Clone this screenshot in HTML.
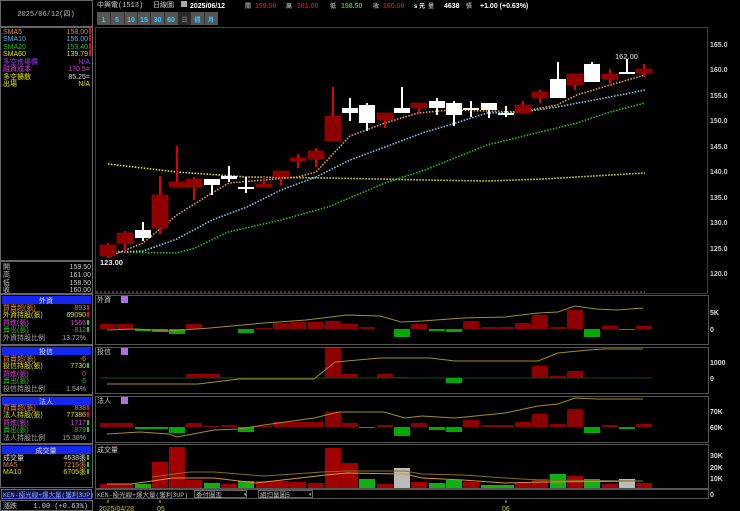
<!DOCTYPE html>
<html><head><meta charset="utf-8"><style>
html,body{margin:0;padding:0;background:#000;width:740px;height:511px;overflow:hidden}
svg{display:block}
text{font-family:"Liberation Sans","Noto Sans CJK TC",sans-serif;font-size:7px}
.m{font-family:"Liberation Mono","Noto Sans CJK TC",monospace}
</style></head><body>
<svg width="740" height="511" viewBox="0 0 740 511" xmlns="http://www.w3.org/2000/svg">
<rect width="740" height="511" fill="#000"/>
<!-- left panel -->
<g fill="none" stroke="#666" stroke-width="1">
<rect x="0.5" y="0.5" width="92" height="26"/>
<rect x="0.5" y="27.5" width="92" height="233"/>
<rect x="0.5" y="261.5" width="92" height="32"/>
<rect x="0.5" y="294.5" width="92" height="50"/>
<rect x="0.5" y="345.5" width="92" height="49"/>
<rect x="0.5" y="395.5" width="92" height="48"/>
<rect x="0.5" y="444.5" width="92" height="43"/>
</g>
<text x="46" y="16" fill="#bbb" text-anchor="middle" class="m">2025/06/12(四)</text>
<g class="m">
<text x="3" y="34" fill="#e08a40">SMA5</text><text x="88" y="34" fill="#e08a40" text-anchor="end">158.00</text>
<text x="3" y="41" fill="#5ab4e6">SMA10</text><text x="88" y="41" fill="#5ab4e6" text-anchor="end">156.00</text>
<text x="3" y="49" fill="#22c022">SMA20</text><text x="88" y="49" fill="#22c022" text-anchor="end">153.40</text>
<text x="3" y="56" fill="#e0e000">SMA60</text><text x="88" y="56" fill="#e0e000" text-anchor="end">139.79</text>
<text x="3" y="64" fill="#9040e0">多空進場價</text><text x="90" y="64" fill="#9040e0" text-anchor="end">N/A</text>
<text x="3" y="71" fill="#e040e0">融資成本</text><text x="90" y="71" fill="#e040e0" text-anchor="end">170.5=</text>
<text x="3" y="79" fill="#e0e000">多空擴散</text><text x="90" y="79" fill="#ddd" text-anchor="end">85.25=</text>
<text x="3" y="86" fill="#e0e000">出場</text><text x="90" y="86" fill="#e0e000" text-anchor="end">N/A</text>
</g>
<g fill="#f00"><rect x="89" y="28" width="2" height="6"/><rect x="89" y="35" width="2" height="6"/><rect x="89" y="43" width="2" height="6"/><rect x="89" y="50" width="2" height="6"/></g>
<g class="m" fill="#ccc">
<text x="3" y="269">開</text><text x="91" y="269" text-anchor="end">159.50</text>
<text x="3" y="277">高</text><text x="91" y="277" text-anchor="end">161.00</text>
<text x="3" y="285">低</text><text x="91" y="285" text-anchor="end">158.50</text>
<text x="3" y="292">收</text><text x="91" y="292" text-anchor="end">160.00</text>
</g>
<!-- section headers -->
<g fill="#1428f0"><rect x="2" y="296" width="89" height="8"/><rect x="2" y="347" width="89" height="8"/><rect x="2" y="397" width="89" height="8"/><rect x="2" y="446" width="89" height="8"/></g>
<g fill="#ddd" text-anchor="middle"><text x="46" y="303">外資</text><text x="46" y="354">投信</text><text x="46" y="404">法人</text><text x="46" y="453">成交量</text></g>
<g class="m">
<text x="3" y="310" fill="#e08a40">買賣超(張)</text><text x="86" y="310" fill="#e08a40" text-anchor="end">893</text>
<text x="3" y="317" fill="#e0e000">外資持股(張)</text><text x="86" y="317" fill="#e0e000" text-anchor="end">69090</text>
<text x="3" y="325" fill="#e040e0">買進(張)</text><text x="86" y="325" fill="#e040e0" text-anchor="end">1566</text>
<text x="3" y="332" fill="#22c022">賣出(張)</text><text x="86" y="332" fill="#22c022" text-anchor="end">812</text>
<text x="3" y="340" fill="#aaa">外資持股比例</text><text x="86" y="340" fill="#aaa" text-anchor="end">13.72%</text>
<text x="3" y="361" fill="#e08a40">買賣超(張)</text><text x="86" y="361" fill="#e08a40" text-anchor="end">-6</text>
<text x="3" y="368" fill="#e0e000">投信持股(張)</text><text x="86" y="368" fill="#e0e000" text-anchor="end">7730</text>
<text x="3" y="376" fill="#e040e0">買進(張)</text><text x="86" y="376" fill="#e040e0" text-anchor="end">0</text>
<text x="3" y="383" fill="#22c022">賣出(張)</text><text x="86" y="383" fill="#22c022" text-anchor="end">6</text>
<text x="3" y="391" fill="#aaa">投信持股比例</text><text x="86" y="391" fill="#aaa" text-anchor="end">1.54%</text>
<text x="3" y="410" fill="#e08a40">買賣超(張)</text><text x="86" y="410" fill="#e08a40" text-anchor="end">838</text>
<text x="3" y="417" fill="#e0e000">法人持股(張)</text><text x="86" y="417" fill="#e0e000" text-anchor="end">77386</text>
<text x="3" y="425" fill="#e040e0">買進(張)</text><text x="86" y="425" fill="#e040e0" text-anchor="end">1717</text>
<text x="3" y="432" fill="#22c022">賣出(張)</text><text x="86" y="432" fill="#22c022" text-anchor="end">879</text>
<text x="3" y="440" fill="#aaa">法人持股比例</text><text x="86" y="440" fill="#aaa" text-anchor="end">15.38%</text>
<text x="3" y="460" fill="#ddd">成交量</text><text x="86" y="460" fill="#ddd" text-anchor="end">4638張</text>
<text x="3" y="467" fill="#e08a40">MA5</text><text x="86" y="467" fill="#e08a40" text-anchor="end">7216張</text>
<text x="3" y="474" fill="#e0e000">MA10</text><text x="86" y="474" fill="#e0e000" text-anchor="end">6705張</text>
</g>
<g fill="#f00"><rect x="87" y="305" width="2" height="5"/><rect x="87" y="312" width="2" height="5"/><rect x="87" y="405" width="2" height="5"/><rect x="87" y="412" width="2" height="5"/></g>
<g fill="#2c2"><rect x="87" y="320" width="2" height="5"/><rect x="87" y="327" width="2" height="5"/><rect x="87" y="363" width="2" height="5"/><rect x="87" y="420" width="2" height="5"/><rect x="87" y="427" width="2" height="5"/><rect x="87" y="455" width="2" height="5"/><rect x="87" y="462" width="2" height="5"/><rect x="87" y="469" width="2" height="5"/></g>
<rect x="1.5" y="489.5" width="90" height="9" fill="#101040" stroke="#55f"/>
<text x="3" y="497" fill="#8af" class="m" style="font-size:6.5px">KEN-極光線+爆大量(獲利3UP)</text>
<rect x="0.5" y="500.5" width="92" height="10" fill="none" stroke="#666"/>
<text x="3" y="508" fill="#ccc" class="m">漲跌</text><text x="88" y="508" fill="#ccc" text-anchor="end" class="m">1.00 (+0.63%)</text>

<!-- top bar -->
<text x="97" y="7" fill="#ccc" class="m">中興電(1513)</text>
<text x="153" y="7" fill="#ccc" class="m">日線圖</text>
<rect x="181" y="1" width="6" height="6" fill="#aaa"/>
<g style="font-size:8.5px;font-weight:bold">
<text x="190" y="8" fill="#fff">2025/06/12</text>
<text x="245" y="8" fill="#aaa" style="font-size:6px">開</text><text x="255" y="8" fill="#e00">159.50</text>
<text x="286" y="8" fill="#aaa" style="font-size:6px">高</text><text x="297" y="8" fill="#e00">161.00</text>
<text x="330" y="8" fill="#aaa" style="font-size:6px">低</text><text x="341" y="8" fill="#2c2">158.50</text>
<text x="373" y="8" fill="#aaa" style="font-size:6px">收</text><text x="383" y="8" fill="#e00">160.00</text>
<text x="414" y="8" fill="#fff" style="font-size:6px">s 元</text>
<text x="428" y="8" fill="#aaa" style="font-size:6px">量</text><text x="444" y="8" fill="#fff">4638</text>
<text x="466" y="8" fill="#aaa" style="font-size:6px">張</text>
<text x="480" y="8" fill="#fff">+1.00 (+0.63%)</text>
</g>
<g>
<rect x="97" y="12" width="121" height="13" fill="#555"/>
<rect x="178" y="12" width="13" height="13" fill="#2a2a2a"/>
<g stroke="#333"><line x1="110.5" y1="12" x2="110.5" y2="25"/><line x1="124.5" y1="12" x2="124.5" y2="25"/><line x1="137.5" y1="12" x2="137.5" y2="25"/><line x1="150.5" y1="12" x2="150.5" y2="25"/><line x1="164.5" y1="12" x2="164.5" y2="25"/><line x1="204.5" y1="12" x2="204.5" y2="25"/></g>
<g fill="#3cf" style="font-size:8px;font-weight:bold" text-anchor="middle">
<text x="103.5" y="22">1</text><text x="117" y="22">5</text><text x="131" y="22">10</text><text x="144" y="22">15</text><text x="157.5" y="22">30</text><text x="171" y="22">60</text>
<text x="184.5" y="22" fill="#777" style="font-size:6px">日</text><text x="197.5" y="22" style="font-size:6px">週</text><text x="211" y="22" style="font-size:6px">月</text>
</g></g>

<!-- main chart frame -->
<rect x="95.5" y="27.5" width="612" height="266" fill="none" stroke="#6a2a3a"/>
<line x1="96" y1="292" x2="645" y2="292" stroke="#a07040" stroke-dasharray="2 2"/>
<g fill="#ccc" style="font-size:7.5px;font-weight:bold">
<text x="710" y="47">165.0</text><text x="710" y="72">160.0</text><text x="710" y="98">155.0</text><text x="710" y="123">150.0</text><text x="710" y="149">145.0</text><text x="710" y="174">140.0</text><text x="710" y="200">135.0</text><text x="710" y="225">130.0</text><text x="710" y="251">125.0</text><text x="710" y="276">120.0</text>
</g>
<!-- MA lines -->
<g fill="none" stroke-width="1.6" stroke-dasharray="1.5 1.5">
<polyline stroke="#e0e020" points="108,164 177,172 247,177 328,178 425,180 487,181 543,179 577,177 645,173"/>
<polyline stroke="#22c022" points="115,252 177,253 195,248 228,232 281,220 328,207 385,183 425,170 487,145 520,137 577,123 610,112 645,103"/>
<polyline stroke="#80c8f0" points="115,252 143,251 177,239 212,220 247,207 281,190 316,177 350,160 385,147 425,132 443,127 487,113 523,112 557,107 610,97 645,90"/>
<polyline stroke="#f0a050" points="108,257 143,243 177,215 212,193 229,183 298,177 316,172 350,136 385,123 418,113 450,110 520,112 557,105 577,95 610,85 645,75"/>
</g>
<!-- candles -->
<g stroke-width="2">
<g stroke="#e00000">
<line x1="108" y1="243" x2="108" y2="258"/><line x1="125" y1="231" x2="125" y2="252"/><line x1="160" y1="176" x2="160" y2="234"/><line x1="177" y1="146" x2="177" y2="187"/><line x1="194" y1="177" x2="194" y2="200"/><line x1="264" y1="177" x2="264" y2="187"/><line x1="281" y1="171" x2="281" y2="185"/><line x1="298" y1="154" x2="298" y2="168"/><line x1="316" y1="148" x2="316" y2="167"/><line x1="333" y1="87" x2="333" y2="141"/><line x1="385" y1="113" x2="385" y2="128"/><line x1="419" y1="103" x2="419" y2="113"/><line x1="523" y1="101" x2="523" y2="113"/><line x1="540" y1="90" x2="540" y2="103"/><line x1="575" y1="74" x2="575" y2="90"/><line x1="610" y1="69" x2="610" y2="85"/><line x1="644" y1="64" x2="644" y2="77"/>
</g>
<g stroke="#fff">
<line x1="143" y1="222" x2="143" y2="241"/><line x1="212" y1="179" x2="212" y2="195"/><line x1="229" y1="166" x2="229" y2="182"/><line x1="246" y1="177" x2="246" y2="193"/><line x1="350" y1="98" x2="350" y2="121"/><line x1="367" y1="103" x2="367" y2="131"/><line x1="402" y1="87" x2="402" y2="113"/><line x1="437" y1="98" x2="437" y2="115"/><line x1="454" y1="101" x2="454" y2="126"/><line x1="471" y1="101" x2="471" y2="117"/><line x1="489" y1="103" x2="489" y2="118"/><line x1="506" y1="106" x2="506" y2="117"/><line x1="558" y1="62" x2="558" y2="98"/><line x1="592" y1="62" x2="592" y2="82"/><line x1="627" y1="59" x2="627" y2="74"/>
</g></g>
<g fill="#8e0000" stroke="#b00000" stroke-width="0.6">
<rect x="100" y="245" width="16" height="11"/><rect x="117" y="233" width="16" height="10"/><rect x="152" y="195" width="16" height="33"/><rect x="169" y="182" width="16" height="5"/><rect x="186" y="179" width="16" height="8"/><rect x="256" y="184" width="16" height="3"/><rect x="273" y="171" width="16" height="6"/><rect x="290" y="158" width="16" height="3"/><rect x="308" y="151" width="16" height="8"/><rect x="325" y="116" width="16" height="25"/><rect x="377" y="113" width="16" height="7"/><rect x="411" y="103" width="16" height="5"/><rect x="515" y="105" width="16" height="8"/><rect x="532" y="92" width="16" height="6"/><rect x="567" y="74" width="16" height="11"/><rect x="602" y="74" width="16" height="5"/><rect x="636" y="69" width="16" height="4"/>
</g>
<g fill="#fff">
<rect x="135" y="230" width="16" height="8"/><rect x="204" y="179" width="16" height="6"/><rect x="221" y="176" width="16" height="3"/><rect x="238" y="187" width="16" height="2"/><rect x="342" y="108" width="16" height="5"/><rect x="359" y="105" width="16" height="18"/><rect x="394" y="108" width="16" height="5"/><rect x="429" y="101" width="16" height="7"/><rect x="446" y="103" width="16" height="12"/><rect x="463" y="108" width="16" height="2"/><rect x="481" y="103" width="16" height="7"/><rect x="498" y="113" width="16" height="2"/><rect x="550" y="79" width="16" height="19"/><rect x="584" y="64" width="16" height="18"/><rect x="619" y="72" width="16" height="2"/>
</g>
<text x="100" y="265" fill="#eee" style="font-size:7.5px;font-weight:bold">123.00</text>
<text x="615" y="59" fill="#eee" style="font-size:7.5px">162.00</text>

<!-- sub panels frames -->
<g fill="none" stroke="#555">
<rect x="95.5" y="295.5" width="613" height="49"/>
<rect x="95.5" y="347.5" width="613" height="46"/>
<rect x="95.5" y="396.5" width="613" height="46"/>
<rect x="95.5" y="444.5" width="613" height="44"/>
</g>
<g fill="#ccc"><text x="97" y="302">外資</text><text x="97" y="354">投信</text><text x="97" y="403">法人</text><text x="97" y="452">成交量</text></g>
<g fill="#b070e0"><rect x="121" y="296" width="7" height="7"/><rect x="121" y="348" width="7" height="7"/><rect x="121" y="397" width="7" height="7"/></g>
<g fill="#ddd" style="font-size:7.5px;font-weight:bold">
<text x="710" y="315">5K</text><text x="710" y="332">0</text>
<text x="710" y="365">1000</text><text x="710" y="381">0</text>
<text x="710" y="414">70K</text><text x="710" y="430">60K</text>
<text x="710" y="458">30K</text><text x="710" y="470">20K</text><text x="710" y="481">10K</text><text x="710" y="497">0</text>
</g>
<!-- 外資 bars -->
<g fill="#8e0000">
<rect x="100" y="324" width="16" height="5"/><rect x="117" y="324" width="16" height="5"/><rect x="186" y="324" width="16" height="5"/><rect x="256" y="328" width="16" height="1"/><rect x="273" y="323" width="16" height="6"/><rect x="290" y="322" width="16" height="7"/><rect x="308" y="322" width="16" height="7"/><rect x="325" y="321" width="16" height="8"/><rect x="342" y="324" width="16" height="5"/><rect x="359" y="327" width="16" height="2"/><rect x="411" y="324" width="16" height="5"/><rect x="463" y="321" width="16" height="8"/><rect x="481" y="327" width="16" height="2"/><rect x="498" y="327" width="16" height="2"/><rect x="515" y="323" width="16" height="6"/><rect x="532" y="315" width="16" height="14"/><rect x="550" y="327" width="16" height="2"/><rect x="567" y="310" width="16" height="19"/><rect x="602" y="326" width="16" height="3"/><rect x="636" y="326" width="16" height="3"/>
</g>
<g fill="#0a0">
<rect x="135" y="329" width="16" height="2"/><rect x="152" y="329" width="16" height="3"/><rect x="169" y="329" width="16" height="5"/><rect x="238" y="329" width="16" height="4"/><rect x="394" y="329" width="16" height="8"/><rect x="429" y="329" width="16" height="2"/><rect x="446" y="329" width="16" height="3"/><rect x="584" y="329" width="16" height="8"/><rect x="619" y="329" width="16" height="1"/>
</g>
<polyline fill="none" stroke="#a09020" stroke-width="1" points="107,330 136,329 169,331 210,328 264,323 306,320 347,315 380,316 401,322 422,321 463,318 505,317 538,313 558,312 575,306 596,309 617,310 643,308"/>
<!-- 投信 -->
<line x1="100" y1="378" x2="652" y2="378" stroke="#1a4a1a"/>
<g fill="#8e0000">
<rect x="186" y="374" width="34" height="4"/><rect x="325" y="348" width="16" height="30"/><rect x="342" y="374" width="16" height="4"/><rect x="377" y="374" width="16" height="4"/><rect x="394" y="377" width="16" height="1"/><rect x="532" y="366" width="16" height="12"/><rect x="550" y="376" width="16" height="2"/><rect x="567" y="371" width="16" height="7"/>
</g>
<rect x="446" y="378" width="16" height="5" fill="#0a0"/>
<polyline fill="none" stroke="#a09020" stroke-width="1" points="107,384 198,384 239,379 314,379 335,362 380,358 430,358 455,361 538,361 558,353 588,350 604,349 643,349"/>
<!-- 法人 -->
<g fill="#8e0000">
<rect x="100" y="423" width="33" height="4"/><rect x="186" y="423" width="16" height="4"/><rect x="204" y="426" width="16" height="1"/><rect x="221" y="425" width="16" height="2"/><rect x="256" y="426" width="16" height="1"/><rect x="273" y="422" width="51" height="5"/><rect x="325" y="412" width="16" height="15"/><rect x="342" y="423" width="16" height="4"/><rect x="377" y="425" width="16" height="2"/><rect x="411" y="423" width="16" height="4"/><rect x="463" y="420" width="16" height="7"/><rect x="481" y="425" width="33" height="2"/><rect x="515" y="422" width="16" height="5"/><rect x="532" y="414" width="16" height="13"/><rect x="550" y="424" width="16" height="3"/><rect x="567" y="409" width="16" height="18"/><rect x="602" y="425" width="16" height="2"/><rect x="636" y="424" width="16" height="3"/>
</g>
<g fill="#0a0">
<rect x="135" y="427" width="33" height="2"/><rect x="169" y="427" width="16" height="6"/><rect x="238" y="427" width="16" height="5"/><rect x="359" y="427" width="16" height="1"/><rect x="394" y="427" width="16" height="9"/><rect x="429" y="427" width="16" height="3"/><rect x="446" y="427" width="16" height="5"/><rect x="584" y="427" width="16" height="6"/><rect x="619" y="427" width="16" height="2"/>
</g>
<polyline fill="none" stroke="#a09020" stroke-width="1" points="107,434 140,432 169,434 177,437 214,430 239,429 264,425 314,418 339,412 384,412 405,418 422,416 455,418 505,413 538,406 558,404 575,398 596,399 643,399"/>
<!-- volume -->
<g fill="#a00000">
<rect x="100" y="484" width="33" height="4"/><rect x="152" y="462" width="16" height="26"/><rect x="169" y="447" width="16" height="41"/><rect x="186" y="480" width="16" height="8"/><rect x="221" y="484" width="16" height="4"/><rect x="256" y="481" width="33" height="7"/><rect x="290" y="482" width="16" height="6"/><rect x="308" y="483" width="16" height="5"/><rect x="325" y="448" width="16" height="40"/><rect x="342" y="463" width="16" height="25"/><rect x="377" y="484" width="16" height="4"/><rect x="411" y="482" width="16" height="6"/><rect x="463" y="482" width="16" height="6"/><rect x="515" y="483" width="16" height="5"/><rect x="532" y="479" width="16" height="9"/><rect x="567" y="476" width="16" height="12"/><rect x="602" y="484" width="16" height="4"/><rect x="636" y="483" width="16" height="5"/>
</g>
<g fill="#10b010">
<rect x="135" y="484" width="16" height="4"/><rect x="204" y="483" width="16" height="5"/><rect x="238" y="481" width="16" height="7"/><rect x="359" y="479" width="16" height="9"/><rect x="429" y="483" width="16" height="5"/><rect x="446" y="480" width="16" height="8"/><rect x="481" y="485" width="33" height="3"/><rect x="550" y="474" width="16" height="14"/><rect x="584" y="479" width="16" height="9"/>
</g>
<g fill="#bbb"><rect x="394" y="468" width="16" height="20"/><rect x="619" y="479" width="16" height="9"/></g>
<polyline fill="none" stroke="#e09030" stroke-width="1" points="107,484 131,484 173,478 214,478 256,483 326,475 347,473 405,474 422,478 463,480 505,483 546,482 643,481"/>
<polyline fill="none" stroke="#807020" stroke-width="1" points="152,477 190,472 214,472 264,476 322,472 347,471 405,471 422,474 463,475 505,478 538,480 643,481"/>
<!-- bottom bar -->
<rect x="95.5" y="489.5" width="613" height="9" fill="#000" stroke="#555"/>
<text x="97" y="497" fill="#bbb" class="m" style="font-size:6.5px">KEN-極光線+爆大量(獲利3UP)</text>
<rect x="194.5" y="490.5" width="52" height="7" fill="#000" stroke="#666"/><text x="196" y="497" fill="#bbb" class="m" style="font-size:6.5px">委付圖盃</text><text x="244" y="496" fill="#bbb" style="font-size:5px">▾</text>
<rect x="258.5" y="490.5" width="54" height="7" fill="#000" stroke="#666"/><text x="260" y="497" fill="#bbb" class="m" style="font-size:6.5px">組均量圖5</text><text x="309" y="496" fill="#bbb" style="font-size:5px">▾</text>
<g stroke="#c0c040"><line x1="108" y1="500" x2="108" y2="503"/><line x1="160" y1="500" x2="160" y2="503"/><line x1="506" y1="500" x2="506" y2="503"/></g>
<g fill="#c0c040" style="font-size:7.5px"><text x="99" y="511">2025/04/28</text><text x="157" y="511">05</text><text x="502" y="511">06</text></g>
</svg>
</body></html>
